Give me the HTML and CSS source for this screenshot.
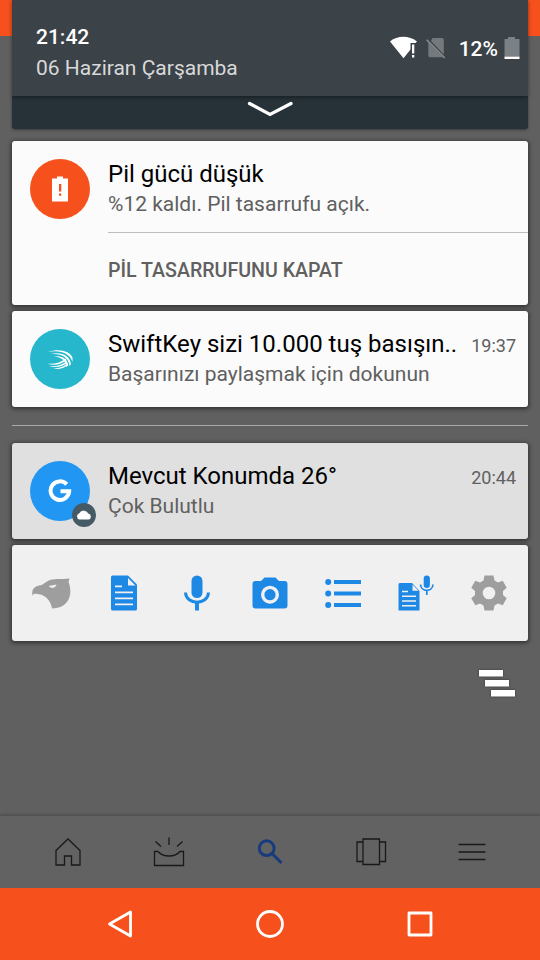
FILE: index.html
```html
<!DOCTYPE html>
<html lang="tr">
<head>
<meta charset="utf-8">
<title>Bildirimler</title>
<link rel="stylesheet" href="styles.css">
</head>
<body>
<div class="screen">
  <main class="shade">
    <header class="header">
      <div class="clock">
        <div class="time">21:42</div>
        <div class="date">06 Haziran Çarşamba</div>
      </div>
      <div class="status">
        <svg class="wifi" width="28" height="24" viewBox="0 0 28 24"><path fill="#fff" d="M0 5.4C7.500-.8 19-.8 27 5.400L25.500 7H20.500V13.500L13.500 22.300Z"/><path fill="#fff" d="M22 8.500h2.300v9H22zM22 19h2.300v2.500H22z"/></svg>
        <svg class="sim" width="20" height="22" viewBox="0 0 20 22"><path fill="#73797c" d="M6.500 1H16q1.800 0 1.800 1.800V17.500L5 4zM2.300 5.500L17 20.300H4q-1.700 0-1.700-1.700z"/><path stroke="#8b9092" stroke-width="1.500" d="M.7 2.800L18.800 21"/></svg>
        <span class="percent">12%</span>
        <svg class="battery" width="16" height="24" viewBox="0 0 16 24"><path fill="#7b8184" d="M4 1h7v2h4.500v18H.500V3H4z"/><path fill="#fff" d="M.500 20.700h15V23H.500z"/></svg>
      </div>
    </header>
    <div class="expand">
      <svg width="48" height="18" viewBox="0 0 48 18"><path fill="none" stroke="#fff" stroke-width="3.300" stroke-linecap="round" d="M3.500 2.500L24 13.500 45 2.500"/></svg>
    </div>

    <section class="card power">
      <div class="avatar orange">
        <svg width="18" height="26" viewBox="0 0 18 26"><path fill="#fff" d="M6 .5h6v2h5v23H1v-23h5z"/><path fill="#f6511d" d="M8 8h2.300v7.500H8zM8 17.500h2.300v2.300H8z"/></svg>
      </div>
      <div class="content">
        <h2 class="title">Pil gücü düşük</h2>
        <p class="text">%12 kaldı. Pil tasarrufu açık.</p>
        <div class="action">PİL TASARRUFUNU KAPAT</div>
      </div>
    </section>

    <section class="card keyboard">
      <div class="avatar teal">
        <svg width="26" height="20" viewBox="0 0 26 20"><g fill="#fff"><path d="M1 3C12-1 23 2 25.500 8.500V13C23 4 13 .8 1 3Z"/><path d="M3 5.200C14 2.500 22.500 6 24 15L22.500 17C21.500 8 14 4 3 5.200Z"/><path d="M7 7.500C15 6 20.500 10 21.300 16.500L19.300 18C19 11.500 14 8 7 7.500Z"/><path d="M0 14.700C8 15.500 14 13.500 18.500 9.500L19.500 11C14 15.700 8 17 0 14.700Z"/><path d="M2 17.200C9 18 15 16 19.500 12.200L20 14C15 18 9 19 2 17.200Z"/><path d="M6 19.300C11 19.700 15 18.500 19 15.600V17.300C15 20 11 20.500 6 19.300Z"/></g></svg>
      </div>
      <div class="content">
        <div class="heading"><h2 class="title">SwiftKey sizi 10.000 tuş basışın..</h2><time class="when">19:37</time></div>
        <p class="text">Başarınızı paylaşmak için dokunun</p>
      </div>
    </section>

    <hr class="divider">

    <section class="card weather">
      <div class="avatar blue">
        <svg width="24" height="24" viewBox="0 0 24 24"><path fill="none" stroke="#fff" stroke-width="4" d="M18.700 5.300A9.300 9.300 0 1 0 21.200 12.200H12.500"/></svg>
        <span class="badge"><svg width="16" height="10" viewBox="0 0 16 10"><path fill="#fff" d="M3.500 9.500A3.200 3.200 0 0 1 3.300 3.300 5 5 0 0 1 12.300 3.600 3 3 0 0 1 12.500 9.500Z"/></svg></span>
      </div>
      <div class="content">
        <div class="heading"><h2 class="title">Mevcut Konumda 26°</h2><time class="when">20:44</time></div>
        <p class="text">Çok Bulutlu</p>
      </div>
    </section>

    <section class="card tools">
      <svg width="40" height="32" viewBox="0 0 40 32"><path fill="#9e9e9e" d="M1.500 18.500C.3 13 3 9.500 8 8.500 12 8.500 14 5 19 3 25 1 32 2.500 38.500 1.500L37.500 5C42 16 39 31 21 31.500 20 24 14 17 5 16.800 3.500 16.800 2.500 17 1.500 18.500Z"/><path fill="#f0f0f0" d="M17.500 9L25.500 7.500Q24.500 11 20.500 11Z"/></svg>
      <svg width="26" height="36" viewBox="0 0 26 36"><path fill="#1e88e5" d="M1.500.5H17L26 9.500V34q0 1.500-1.500 1.500H1.500Q0 35.500 0 34V2Q0 .5 1.500.5z"/><path fill="#f0f0f0" d="M17 3v7.500h7.500zM4 10.500h7v1.800H4zM4 16.500h18v1.800H4zM4 22.500h18v1.800H4zM4 28.500h18v1.800H4z"/></svg>
      <svg width="26" height="36" viewBox="0 0 26 36"><rect x="7.500" y=".5" width="11" height="22.500" rx="5.500" fill="#1e88e5"/><path fill="none" stroke="#1e88e5" stroke-width="3" d="M1.500 17.500C2 30.500 24 30.500 24.500 17.500"/><path fill="#1e88e5" d="M11 27h4v8.500h-4z"/></svg>
      <svg width="36" height="32" viewBox="0 0 36 32"><path fill="#1e88e5" fill-rule="evenodd" d="M12.500.5h11L27 4h5.500q3 0 3 3v21.500q0 3-3 3h-29q-3 0-3-3V7q0-3 3-3H9zM18 8.700a9 9 0 1 0 0 18 9 9 0 1 0 0-18z"/><circle cx="18" cy="17.700" r="5.600" fill="#1e88e5"/></svg>
      <svg width="36" height="30" viewBox="0 0 36 30"><path fill="#1e88e5" d="M9 2h27v4H9zM9 13.500h27v4H9zM9 25h27v4H9z"/><circle cx="3.200" cy="4" r="3" fill="#1e88e5"/><circle cx="3.200" cy="15.500" r="3" fill="#1e88e5"/><circle cx="3.200" cy="27" r="3" fill="#1e88e5"/></svg>
      <svg width="36" height="36" viewBox="0 0 36 36"><path fill="#1e88e5" d="M1.500 8H14l7.500 8v19.500H.5V9z"/><path fill="#f0f0f0" d="M14.500 9.500v6.300h6zM4 15.800h6v1.500H4zM4 20.500h14V22H4zM4 25.200h14v1.500H4zM4 29.900h14v1.500H4z"/><rect x="25.700" y=".5" width="6.200" height="12.500" rx="3" fill="#1e88e5"/><path fill="none" stroke="#1e88e5" stroke-width="1.700" d="M22.500 9.500C23 17.300 34.500 17.300 35 9.500M28.800 15v5"/></svg>
      <svg width="36" height="36" viewBox="0 0 36 36"><path fill="#9e9e9e" fill-rule="evenodd" d="M13.500.5h9l1 5 3.500 2 4.700-1.800 4 7L32 16v4l3.700 3.300-4 7L27 28.500l-3.500 2-1 5h-9l-1-5-3.500-2-4.700 1.800-4-7L4 20v-4L.3 12.700l4-7L9 7.500l3.500-2zM18 11.700a6.300 6.300 0 1 0 0 12.600 6.300 6.300 0 1 0 0-12.600z"/></svg>
    </section>

    <div class="clear">
      <svg width="36" height="27" viewBox="0 0 36 27"><path fill="#fff" d="M0 0h24v6.500H0zM6 10h24v6.500H6zM12 20h24v6.500H12z"/></svg>
    </div>
  </main>

  <nav class="tabs">
    <svg width="26" height="28" viewBox="0 0 26 28"><path d="M1 12.500L13 1 25 12.500V27h-8.500v-9h-7v9H1z"/></svg>
    <svg width="32" height="30" viewBox="0 0 32 30"><path d="M1.500 14.500H5C10 20.500 22 20.500 27 14.500h3.500V28.500h-29zM16 .5V8M2.500 4.500l5.500 5M29.500 4.500l-5.500 5"/></svg>
    <svg width="28" height="28" viewBox="0 0 28 28"><g class="accent"><circle cx="10.700" cy="10.200" r="7.400"/><path d="M16 15.500l9.500 9.500"/></g></svg>
    <svg width="32" height="28" viewBox="0 0 32 28"><path d="M8 1h16.500v25.500H8zM8 4H2v19.500h6M24.500 4h6v19.500h-6"/></svg>
    <svg width="28" height="18" viewBox="0 0 28 18"><path d="M.5 1.500h27M.5 9h27M.5 16.500h27"/></svg>
  </nav>

  <nav class="system">
    <svg width="26" height="30" viewBox="0 0 26 30"><path d="M23.500 3v24L2.500 15z"/></svg>
    <svg width="30" height="30" viewBox="0 0 30 30"><circle cx="15" cy="15" r="12.500"/></svg>
    <svg width="26" height="26" viewBox="0 0 26 26"><rect x="2" y="2" width="22" height="22"/></svg>
  </nav>
</div>
</body>
</html>
```
FILE: styles.css
```css
* { box-sizing: border-box; margin: 0; padding: 0; }
body { font-family: Roboto, sans-serif; color: #000; }
svg { display: block; flex: none; }

.screen {
  width: 540px;
  height: 960px;
  display: flex;
  flex-direction: column;
  overflow: hidden;
  background: linear-gradient(#f6511d 36px, #606060 36px);
}
.shade { flex: 1; padding: 0 12px; }

.header {
  position: relative;
  display: flex;
  justify-content: space-between;
  height: 96px;
  padding: 25px 8px 0 24px;
  background: #3b4248;
  color: #fff;
  box-shadow: 0 1px 4px rgba(0, 0, 0, .45);
}
.time { font-size: 21px; line-height: 25px; font-weight: 500; }
.date { margin-top: 6px; font-size: 21px; line-height: 25px; color: #d8d9da; }
.status { display: flex; align-items: center; height: 24px; margin-top: 11px; }
.sim { margin-left: 8px; }
.percent { margin-left: 13px; padding-top: 2px; font-size: 21px; line-height: 24px; font-weight: 500; }
.battery { margin-left: 6px; }

.expand {
  display: flex;
  justify-content: center;
  height: 33px;
  padding-top: 5px;
  background: #263238;
  border-radius: 0 0 3px 3px;
  box-shadow: 0 1px 3px rgba(0, 0, 0, .4);
}

.card {
  display: flex;
  height: 96px;
  background: #fbfbfb;
  border-radius: 3px;
  box-shadow: 0 1px 4px 1px rgba(0, 0, 0, .5);
}
.power { height: 164px; margin-top: 12px; }
.keyboard { margin-top: 6px; }
.weather { background: #e0e0e0; }
.content { flex: 1; min-width: 0; padding-top: 18px; }
.heading { display: flex; justify-content: space-between; height: 30px; padding-right: 12px; }
.title { font-size: 24px; line-height: 30px; font-weight: 400; white-space: nowrap; }
.text { font-size: 21px; line-height: 30px; color: #606060; }
.when { font-size: 18px; line-height: 33px; color: #606060; }
.action {
  height: 73px;
  margin-top: 13px;
  border-top: 1px solid #bdbdbd;
  font-size: 19.600px;
  line-height: 76px;
  font-weight: 500;
  color: #606060;
}

.avatar {
  position: relative;
  display: flex;
  align-items: center;
  justify-content: center;
  width: 60px;
  height: 60px;
  margin: 18px 18px 0;
  border-radius: 50%;
  flex: none;
}
.orange { background: #f6511d; }
.teal { background: #26b7cd; }
.blue { background: #2196f3; }
.badge {
  position: absolute;
  right: -6px;
  bottom: -6px;
  display: flex;
  align-items: center;
  justify-content: center;
  width: 24px;
  height: 24px;
  border-radius: 50%;
  background: #455a64;
}
.divider { height: 1px; margin: 18px 0 17px; border: 0; background: #a8a8a8; }

.tools {
  display: grid;
  grid-template-columns: repeat(7, 1fr);
  place-items: center;
  margin-top: 6px;
  padding: 0 2px;
  background: #f0f0f0;
}
.clear { display: flex; justify-content: flex-end; padding: 29px 13px 0 0; }
.clear svg { filter: drop-shadow(0 0 1px #333); }

.tabs {
  display: grid;
  grid-template-columns: repeat(5, 1fr);
  place-items: center;
  height: 72px;
  padding: 0 18px 0 17px;
  background: #626262;
  box-shadow: 0 -1px 3px rgba(0, 0, 0, .25);
  fill: none;
  stroke: #18191c;
  stroke-width: 1.3;
}
.accent { stroke: #173b7c; stroke-width: 3; }
.system {
  display: grid;
  grid-template-columns: repeat(3, 1fr);
  place-items: center;
  height: 72px;
  padding: 0 45px;
  background: #f6511d;
  fill: none;
  stroke: #fff;
  stroke-width: 2.800;
  stroke-linejoin: round;
}
```
